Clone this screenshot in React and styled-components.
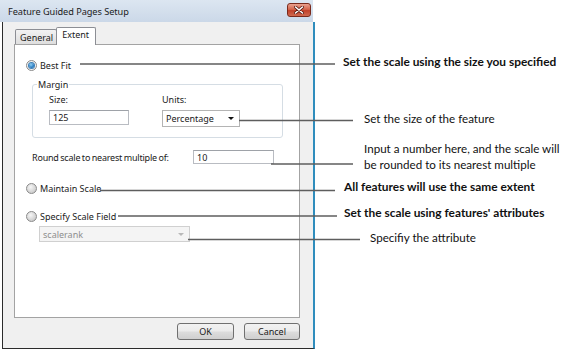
import styled, { createGlobalStyle } from "styled-components";

const GlobalStyle = createGlobalStyle`
  html, body {
    margin: 0;
    padding: 0;
    background: #ffffff;
  }
  * {
    box-sizing: border-box;
  }
`;

const Page = styled.div`
  position: relative;
  width: 567px;
  height: 353px;
  overflow: hidden;
  font-family: "Noto Sans", "Open Sans", sans-serif;
  font-size: 9px;
  color: #1a1a1a;
`;

const Window = styled.div`
  width: 315px;
  display: flex;
  flex-direction: column;
`;

const TitleBar = styled.div`
  height: 22px;
  width: 313px;
  display: flex;
  align-items: center;
  justify-content: space-between;
  padding: 0 2px 0 8px;
  background: linear-gradient(#dce6f1, #cbd8e8);
  font-size: 9.2px;
  letter-spacing: -0.05px;
  color: #1b1b1b;
`;

const CloseButton = styled.div`
  width: 24px;
  height: 14px;
  margin-top: -2px;
  display: flex;
  align-items: center;
  justify-content: center;
  border: 1px solid #7a2a1c;
  border-radius: 3px;
  background: linear-gradient(#e9a290, #d4654c 45%, #c2412a 55%, #cf6a4f);
`;

const Frame = styled.div`
  width: 313px;
  margin-left: 2px;
  display: flex;
  flex-direction: column;
  padding: 5px 13px 8px 11px;
  background: #f0f0f0;
  border-left: 1px solid #2b2b2b;
  border-bottom: 1px solid #2b2b2b;
  border-right: 2px solid #2f8dbd;
`;

const TabStrip = styled.div`
  height: 17px;
  display: flex;
  align-items: flex-end;
  padding-left: 1px;
`;

const Tab = styled.div`
  position: relative;
  height: ${(p) => (p.$active ? 18 : 15)}px;
  margin-bottom: ${(p) => (p.$active ? -1 : 0)}px;
  margin-left: ${(p) => (p.$active ? -1 : 0)}px;
  z-index: ${(p) => (p.$active ? 1 : 0)};
  padding: ${(p) => (p.$active ? "1px 6px 0 5px" : "2px 3px 0 4px")};
  border: 1px solid #8c8e94;
  border-bottom: none;
  border-radius: 2px 2px 0 0;
  background: ${(p) => (p.$active ? "#ffffff" : "linear-gradient(#f2f2f2, #dedede)")};
  line-height: 12px;
`;

const Panel = styled.div`
  height: 274px;
  display: flex;
  flex-direction: column;
  padding: 14px 16px 0 11px;
  background: #ffffff;
  border: 1px solid #a3a3a3;
`;

const OptionRow = styled.div`
  height: 12px;
  display: flex;
  align-items: center;
  gap: 3px;
  margin-top: ${(p) => p.$gap || 0}px;
`;

const Radio = styled.span`
  width: 11px;
  height: 11px;
  flex: none;
  display: flex;
  align-items: center;
  justify-content: center;
  border: 1px solid #8a8a8a;
  border-radius: 50%;
  background: ${(p) =>
    p.$checked
      ? "radial-gradient(circle, #f4f4f4 60%, #dcdcdc)"
      : "radial-gradient(circle at 40% 35%, #f6f6f6, #c9c9c9 80%)"};

  &::after {
    content: "";
    display: ${(p) => (p.$checked ? "block" : "none")};
    width: 5px;
    height: 5px;
    border-radius: 50%;
    background: radial-gradient(circle at 40% 35%, #8fd0f5, #1b6fb8 70%);
    box-shadow: 0 0 0 1px #3e7fb6;
  }
`;

const Group = styled.div`
  margin: 13px 0 0 6px;
  width: 251px;
  height: 54px;
  display: flex;
  flex-direction: column;
  padding: 0 0 0 16px;
  border: 1px solid #d5dde4;
  border-radius: 3px;
`;

const Legend = styled.span`
  align-self: flex-start;
  margin: -6px 0 0 -12px;
  padding: 0 1px;
  line-height: 11px;
  background: #ffffff;
`;

const FieldRow = styled.div`
  display: flex;
  margin-top: 4px;
`;

const Field = styled.div`
  width: ${(p) => p.$width}px;
  display: flex;
  flex-direction: column;
  gap: 5px;
`;

const FieldLabel = styled.span`
  line-height: 11px;
`;

const TextBox = styled.div`
  width: ${(p) => p.$width}px;
  height: ${(p) => p.$height || 15}px;
  display: flex;
  align-items: center;
  padding-left: 3px;
  background: #ffffff;
  border: 1px solid #b9bcc2;
  border-top-color: #9ea2a8;
`;

const Select = styled.div`
  width: ${(p) => p.$width}px;
  height: ${(p) => p.$height}px;
  display: flex;
  align-items: center;
  justify-content: space-between;
  padding: 0 5px 0 3px;
  margin-left: ${(p) => p.$indent || 0}px;
  margin-top: ${(p) => p.$gap || 0}px;
  background: ${(p) => (p.$disabled ? "#f4f4f4" : "#ffffff")};
  border: 1px solid ${(p) => (p.$disabled ? "#d0d0d0" : "#b4b4b4")};
  color: ${(p) => (p.$disabled ? "#8e8e8e" : "#1a1a1a")};
`;

const Caret = styled.span`
  width: 0;
  height: 0;
  border-left: 3px solid transparent;
  border-right: 3px solid transparent;
  border-top: 3px solid ${(p) => (p.$disabled ? "#b8b8b8" : "#111111")};
`;

const InlineRow = styled.div`
  display: flex;
  align-items: center;
  margin: 12px 0 0 6px;
`;

const InlineLabel = styled.span`
  width: 161px;
  letter-spacing: -0.2px;
  word-spacing: -0.6px;
`;

const ButtonRow = styled.div`
  display: flex;
  justify-content: flex-end;
  gap: 10px;
  margin-top: 5px;
`;

const Button = styled.div`
  width: ${(p) => p.$width}px;
  height: 17px;
  display: flex;
  align-items: center;
  justify-content: center;
  border: 1px solid #707070;
  border-radius: 3px;
  background: linear-gradient(#f2f2f2 0%, #ebebeb 48%, #dddddd 52%, #cfcfcf 100%);
  font-size: 9px;
`;

const Leaders = styled.svg`
  position: absolute;
  left: 0;
  top: 0;
  pointer-events: none;
`;

const Callout = styled.div`
  position: absolute;
  left: ${(p) => p.$x}px;
  top: ${(p) => p.$y}px;
  font-family: Lato, "Noto Sans", sans-serif;
  font-size: ${(p) => (p.$bold ? 11.9 : 11.6)}px;
  font-weight: ${(p) => (p.$bold ? 700 : 400)};
  line-height: 16px;
  color: #111111;
  white-space: nowrap;
`;

const leaders = [
  { x1: 80, x2: 335, y: 64 },
  { x1: 239, x2: 353, y: 120.5 },
  { x1: 271, x2: 353, y: 164 },
  { x1: 100, x2: 335, y: 190.5 },
  { x1: 118, x2: 337, y: 216 },
  { x1: 188, x2: 360, y: 239.5 },
];

const callouts = [
  { x: 343, y: 54, bold: true, lines: ["Set the scale using the size you specified"] },
  { x: 364, y: 111, lines: ["Set the size of the feature"] },
  {
    x: 364,
    y: 141,
    lines: ["Input a number here, and the scale will", "be rounded to its nearest multiple"],
  },
  { x: 344, y: 179, bold: true, lines: ["All features will use the same extent"] },
  { x: 344, y: 205, bold: true, lines: ["Set the scale using features' attributes"] },
  { x: 370, y: 230, lines: ["Specifiy the attribute"] },
];

function CloseGlyph() {
  return (
    <svg width="10" height="8" viewBox="0 0 10 8">
      <path d="M1.5 1 L8.5 7 M8.5 1 L1.5 7" stroke="#5a1a10" strokeWidth="3" strokeLinecap="round" />
      <path d="M1.5 1 L8.5 7 M8.5 1 L1.5 7" stroke="#ffffff" strokeWidth="1.6" strokeLinecap="round" />
    </svg>
  );
}

function App() {
  return (
    <Page>
      <GlobalStyle />
      <Window>
        <TitleBar>
          <span>Feature Guided Pages Setup</span>
          <CloseButton>
            <CloseGlyph />
          </CloseButton>
        </TitleBar>
        <Frame>
          <TabStrip>
            <Tab>General</Tab>
            <Tab $active>Extent</Tab>
          </TabStrip>
          <Panel>
            <OptionRow>
              <Radio $checked />
              Best Fit
            </OptionRow>
            <Group>
              <Legend>Margin</Legend>
              <FieldRow>
                <Field $width={113}>
                  <FieldLabel>Size:</FieldLabel>
                  <TextBox $width={80}>125</TextBox>
                </Field>
                <Field $width={90}>
                  <FieldLabel>Units:</FieldLabel>
                  <Select $width={78} $height={17}>
                    Percentage
                    <Caret />
                  </Select>
                </Field>
              </FieldRow>
            </Group>
            <InlineRow>
              <InlineLabel>Round scale to nearest multiple of:</InlineLabel>
              <TextBox $width={81} $height={14}>
                10
              </TextBox>
            </InlineRow>
            <OptionRow $gap={18}>
              <Radio />
              Maintain Scale
            </OptionRow>
            <OptionRow $gap={16}>
              <Radio />
              Specify Scale Field
            </OptionRow>
            <Select $width={151} $height={16} $indent={13} $gap={4} $disabled>
              scalerank
              <Caret $disabled />
            </Select>
          </Panel>
          <ButtonRow>
            <Button $width={57}>OK</Button>
            <Button $width={56}>Cancel</Button>
          </ButtonRow>
        </Frame>
      </Window>

      <Leaders width="567" height="353">
        {leaders.map((l, i) => (
          <line key={i} x1={l.x1} y1={l.y} x2={l.x2} y2={l.y} stroke="#5e5e5e" strokeWidth="1.5" />
        ))}
      </Leaders>

      {callouts.map((c, i) => (
        <Callout key={i} $x={c.x} $y={c.y} $bold={c.bold}>
          {c.lines.map((t) => (
            <div key={t}>{t}</div>
          ))}
        </Callout>
      ))}
    </Page>
  );
}

export default App;
